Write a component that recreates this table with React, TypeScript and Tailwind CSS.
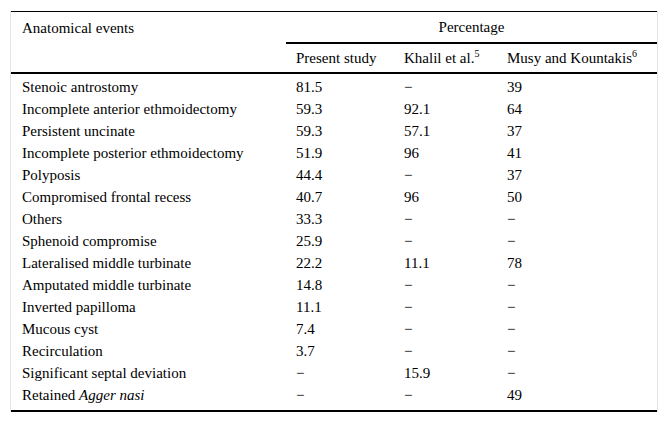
import React from "react";

const rows: [React.ReactNode, string, string, string][] = [
  ["Stenoic antrostomy", "81.5", "\u2212", "39"],
  ["Incomplete anterior ethmoidectomy", "59.3", "92.1", "64"],
  ["Persistent uncinate", "59.3", "57.1", "37"],
  ["Incomplete posterior ethmoidectomy", "51.9", "96", "41"],
  ["Polyposis", "44.4", "\u2212", "37"],
  ["Compromised frontal recess", "40.7", "96", "50"],
  ["Others", "33.3", "\u2212", "\u2212"],
  ["Sphenoid compromise", "25.9", "\u2212", "\u2212"],
  ["Lateralised middle turbinate", "22.2", "11.1", "78"],
  ["Amputated middle turbinate", "14.8", "\u2212", "\u2212"],
  ["Inverted papilloma", "11.1", "\u2212", "\u2212"],
  ["Mucous cyst", "7.4", "\u2212", "\u2212"],
  ["Recirculation", "3.7", "\u2212", "\u2212"],
  ["Significant septal deviation", "\u2212", "15.9", "\u2212"],
  [
    <>
      Retained <i>Agger nasi</i>
    </>,
    "\u2212",
    "\u2212",
    "49",
  ],
];

export default function App() {
  return (
    <div className="w-[669px] h-[423px] bg-white pt-[11px] pl-[10px] font-['Liberation_Serif',serif] text-[15px] leading-[18px] text-black">
      <div className="w-[648px] border-x border-[#e4e4e4]">
        <table className="w-full border-collapse table-fixed">
          <colgroup>
            <col className="w-[275px]" />
            <col className="w-[108px]" />
            <col className="w-[103px]" />
            <col />
          </colgroup>
          <thead>
            <tr className="border-t border-black">
              <th rowSpan={2} className="align-top text-left font-normal pl-[11px] pt-[7px] border-b-2 border-black">
                Anatomical events
              </th>
              <th colSpan={3} className="font-normal h-[31px] border-b-2 border-black text-center">
                Percentage
              </th>
            </tr>
            <tr className="border-b-2 border-black">
              <th className="font-normal text-left pl-[10px] h-[30px]">Present study</th>
              <th className="font-normal text-left pl-[10px]">
                Khalil et al.<span className="relative top-[-6px] text-[10px] leading-none">5</span>
              </th>
              <th className="font-normal text-left pl-[10px]">
                Musy and Kountakis<span className="relative top-[-6px] text-[10px] leading-none">6</span>
              </th>
            </tr>
          </thead>
          <tbody>
            <tr className="h-[3px]"><td colSpan={4}></td></tr>
            {rows.map((r, i) => (
              <tr key={i} className="h-[22px]">
                <td className="pl-[11px]">{r[0]}</td>
                <td className="pl-[10px]">{r[1]}</td>
                <td className="pl-[10px]">{r[2]}</td>
                <td className="pl-[10px]">{r[3]}</td>
              </tr>
            ))}
            <tr className="h-[5px] border-b-2 border-black"><td colSpan={4}></td></tr>
          </tbody>
        </table>
      </div>
    </div>
  );
}
